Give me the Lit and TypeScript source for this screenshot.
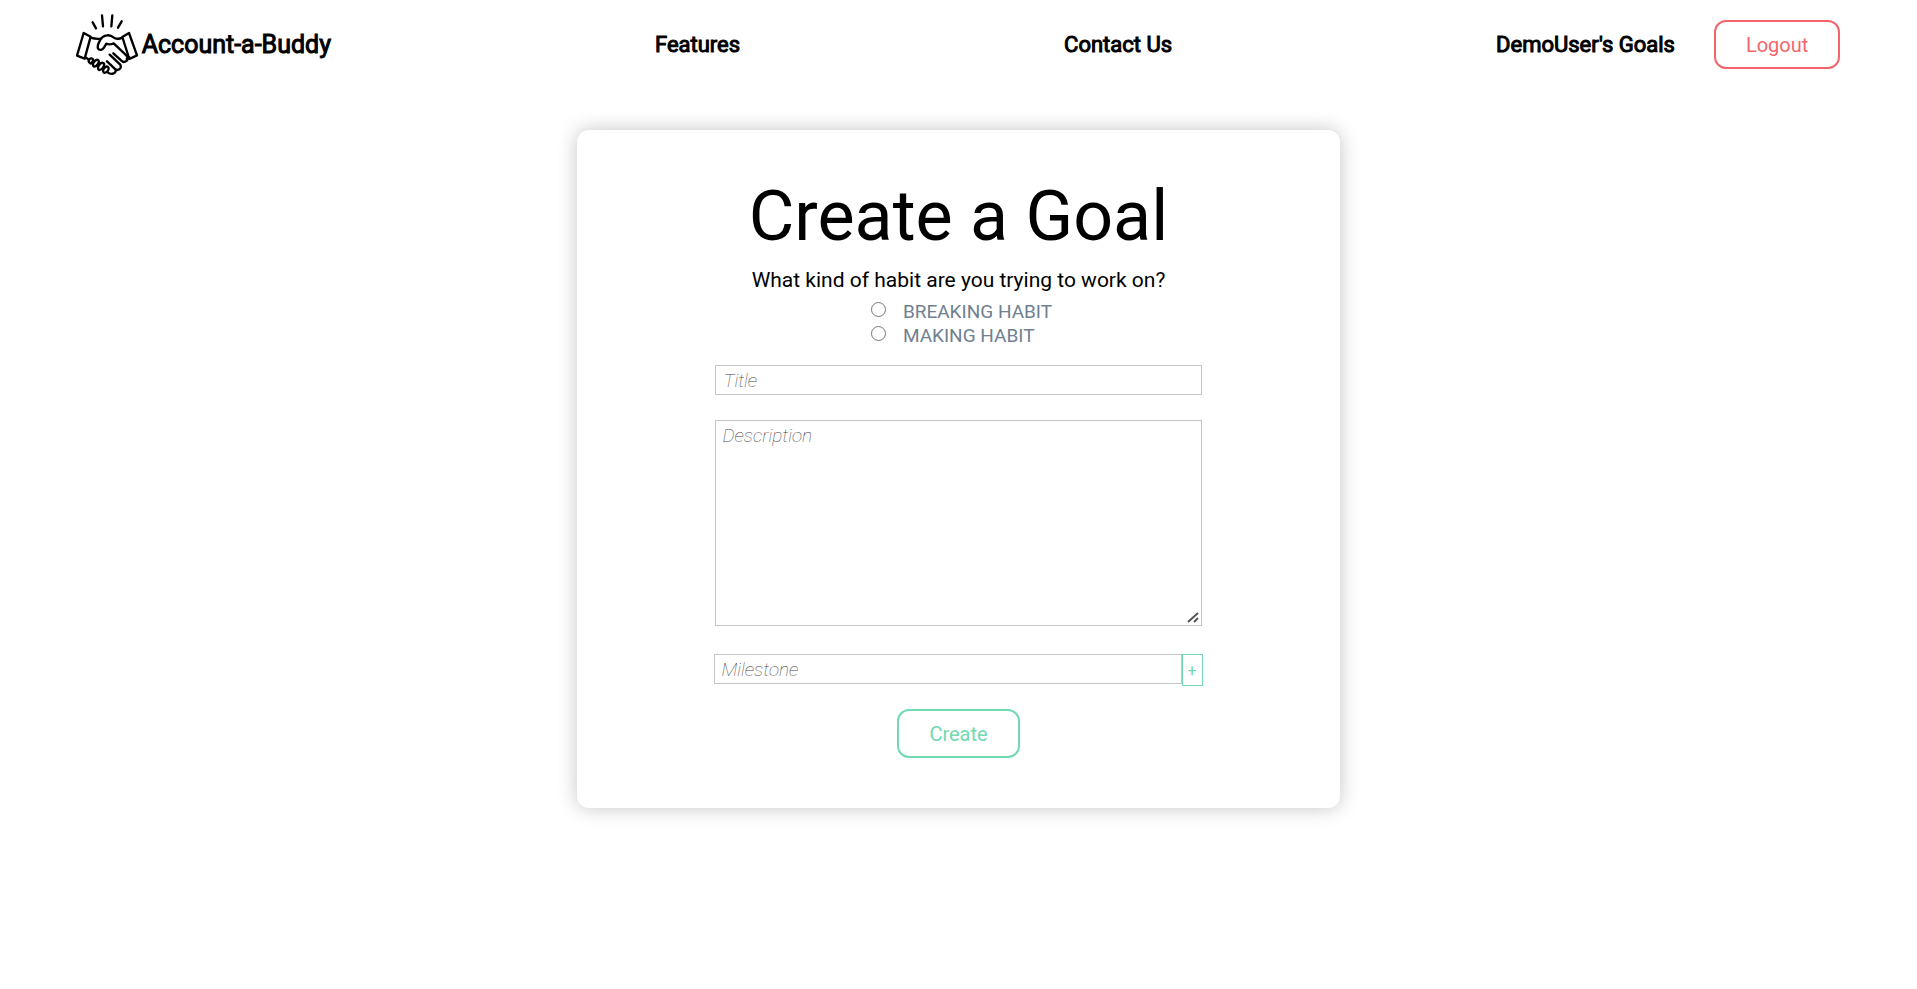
import { LitElement, html, css } from "lit";
import { customElement } from "lit/decorators.js";

@customElement("site-nav")
export class SiteNav extends LitElement {
  static styles = css`
    :host {
      display: block;
    }
    .bar {
      display: flex;
      align-items: center;
      justify-content: space-between;
      padding: 8px 4% 9px;
    }
    .link {
      padding-top: 1px;
      color: #000;
      font-size: 22px;
      line-height: 28px;
      -webkit-text-stroke: 1px #000;
      text-decoration: none;
    }
    .brand {
      display: flex;
      align-items: center;
      padding: 0;
      font-size: 25px;
    }
    .name {
      padding-top: 2px;
    }
    .mark {
      width: 72px;
      height: 72px;
      margin: 0 0 0 -7px;
    }
    .account {
      display: flex;
      align-items: center;
      gap: 39px;
    }
    .logout {
      font: inherit;
      font-size: 20px;
      line-height: 23px;
      padding: 12px 30px 10px;
      color: #f2666b;
      background: #fff;
      border: 2px solid #f2666b;
      border-radius: 12px;
      cursor: pointer;
    }
  `;

  render() {
    return html`
      <nav class="bar">
        <a class="link brand" href="#">
          <svg
            class="mark"
            viewBox="0 0 216 216"
            fill="none"
            stroke="#000"
            stroke-width="7"
            stroke-linecap="round"
            stroke-linejoin="round"
            aria-hidden="true"
          >
            <path d="M68 43l10 18M96 22l3 33M127 22l-3 33M155 40l-11 19" />
            <path d="M41 75l21 11-18 66-23-9zM177 75l-20 12 21 66 23-11z" />
            <path d="M62 89c12 4 22 4 32 3M157 89c-11 5-18 4-25 0-8-6-15-8-21-7-11 1-17 7-21 15-4 7-9 17-6 25 4 6 14 4 18-3l7-12c10 4 16 2 22-1l38 36c6 6 5 14-1 18-5 3-10 2-14-2l-24-22" />
            <path d="M48 149l8 6M178 148l-8 5M119 140l31 29c4 5 3 12-2 15-5 3-10 2-14-2l-23-22M136 184c3 5 0 10-5 12-6 3-13 1-18-3" />
            <path d="M60 165c-8-5-2-15 5-14 6 1 5 8 0 14-2 3-4 2-5 0zM72 176c-9-5 4-24 12-20 7 4-3 21-12 20zM87 186c-9-5 4-25 13-21 7 5-4 22-13 21zM102 194c-8-5 3-21 11-18 8 5-2 20-11 18z" />
          </svg>
          <span class="name">Account-a-Buddy</span>
        </a>
        <a class="link" href="#features">Features</a>
        <a class="link" href="#contact">Contact Us</a>
        <div class="account">
          <a class="link" href="#goals">DemoUser's Goals</a>
          <button class="logout" type="button">Logout</button>
        </div>
      </nav>
    `;
  }
}

@customElement("goal-form")
export class GoalForm extends LitElement {
  static styles = css`
    :host {
      display: block;
    }
    .card {
      box-sizing: border-box;
      display: flex;
      flex-direction: column;
      align-items: center;
      padding: 48px 24px 50px;
      background: #fff;
      border-radius: 12px;
      box-shadow: 0 0 20px rgba(0, 0, 0, 0.23);
    }
    .title {
      margin: 0;
      font-size: 70px;
      line-height: 76px;
      font-weight: 400;
    }
    .habits {
      display: flex;
      flex-direction: column;
      align-items: center;
      margin: 14px 0 0;
      padding: 0;
      border: 0;
    }
    .question {
      padding: 0 0 7px;
      font-size: 21px;
      line-height: 24px;
    }
    .option {
      display: flex;
      align-items: center;
      gap: 17px;
      height: 24px;
      font-size: 19px;
      color: #708090;
    }
    .radio {
      width: 15px;
      height: 15px;
      margin: 0 0 3px 6px;
    }
    .fields {
      box-sizing: border-box;
      display: flex;
      flex-direction: column;
      width: 68%;
      margin: 18px 0 23px;
    }
    .field {
      box-sizing: border-box;
      width: 100%;
      min-width: 0;
      margin: 0;
      font: inherit;
      font-size: 19px;
      line-height: 22px;
      color: #000;
      border: 1px solid #c4c4c4;
      border-radius: 0;
      background: #fff;
    }
    .field::placeholder {
      color: #444;
      font-style: italic;
      font-weight: 100;
      opacity: 1;
    }
    .line {
      height: 30px;
      padding: 3px 7px;
    }
    .area {
      display: block;
      height: 206px;
      margin: 25px 0 28px;
      padding: 4px 6px 2px;
      resize: both;
    }
    .area::-webkit-resizer {
      background: url("data:image/svg+xml,%3Csvg xmlns='http://www.w3.org/2000/svg' width='15' height='15' fill='none' stroke='%23555' stroke-width='2'%3E%3Cpath d='M2 12l10-9M8 12l4-4'/%3E%3C/svg%3E")
        no-repeat;
    }
    .milestone {
      display: flex;
      align-items: flex-start;
      margin: 0 -1px;
    }
    .milestone .line {
      padding: 3px 6px;
    }
    .add {
      flex: none;
      width: 21px;
      height: 32px;
      padding: 0;
      font: inherit;
      font-size: 16px;
      color: #72d9b0;
      background: #fff;
      border: 1px solid #72d9b0;
      cursor: pointer;
    }
    .create {
      font: inherit;
      font-size: 20px;
      line-height: 23px;
      padding: 12px 30px 10px;
      color: #72d9b0;
      background: #fff;
      border: 2px solid #72d9b0;
      border-radius: 12px;
      cursor: pointer;
    }
  `;

  render() {
    return html`
      <form class="card" @submit=${(e: Event) => e.preventDefault()}>
        <h1 class="title">Create a Goal</h1>
        <fieldset class="habits">
          <legend class="question">What kind of habit are you trying to work on?</legend>
          <div>
            <label class="option"><input class="radio" type="radio" name="habit" value="breaking" />BREAKING HABIT</label>
            <label class="option"><input class="radio" type="radio" name="habit" value="making" />MAKING HABIT</label>
          </div>
        </fieldset>
        <div class="fields">
          <input class="field line" type="text" placeholder="Title" aria-label="Title" />
          <textarea class="field area" placeholder="Description" aria-label="Description"></textarea>
          <div class="milestone">
            <input class="field line" type="text" placeholder="Milestone" aria-label="Milestone" />
            <button class="add" type="button" aria-label="Add milestone">+</button>
          </div>
        </div>
        <button class="create" type="submit">Create</button>
      </form>
    `;
  }
}

@customElement("app-root")
export class AppRoot extends LitElement {
  static styles = css`
    :host {
      display: block;
      min-height: 100vh;
      font-family: Roboto, "Liberation Sans", sans-serif;
      color: #000;
      background: #fff;
    }
    .main {
      display: flex;
      justify-content: center;
      padding: 41px 16px;
    }
    .form {
      width: 763px;
      max-width: 100%;
    }
  `;

  render() {
    return html`
      <site-nav></site-nav>
      <main class="main"><goal-form class="form"></goal-form></main>
    `;
  }
}
